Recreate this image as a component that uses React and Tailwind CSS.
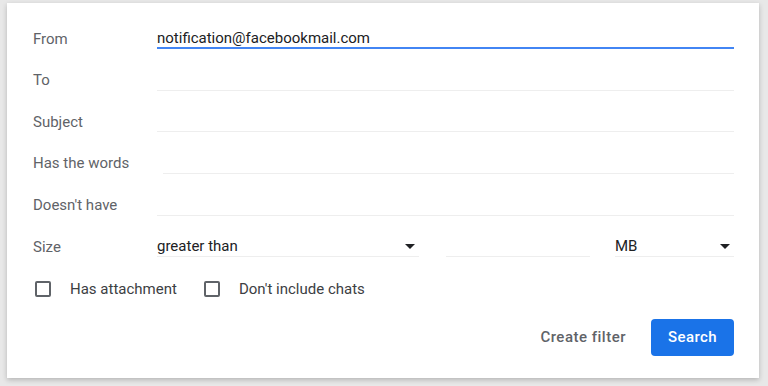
import React from "react";

const Arrow = () => (
  <svg width="10" height="5" viewBox="0 0 10 5" className="shrink-0">
    <path d="M0 0h10L5 5z" fill="#202124" />
  </svg>
);

const Row = ({ label, children }) => (
  <div className="flex h-[41.6px] items-center">
    <div className="w-[124px] shrink-0 text-[15px] text-[#5f6368]">{label}</div>
    <div className="flex flex-1 items-center">{children}</div>
  </div>
);

const Field = ({ value, active, className = "" }) => (
  <div
    className={
      "flex h-[21px] flex-1 items-center text-[15px] text-[#202124] " +
      (active ? "border-b-2 border-[#4285f4] " : "border-b border-[#eeeeee] ") +
      className
    }
  >
    {value}
  </div>
);

const Checkbox = ({ label }) => (
  <label className="flex items-center">
    <span className="h-4 w-4 rounded-[2px] border-2 border-[#5f6368]" />
    <span className="ml-[19px] text-[15px] text-[#3c4043]">{label}</span>
  </label>
);

export default function App() {
  return (
    <div
      className="min-h-screen bg-[#e8e8e8] pl-[7px] pt-[3px]"
      style={{ fontFamily: "Roboto, 'Liberation Sans', sans-serif" }}
    >
      <div className="w-[752px] h-[375px] bg-white pl-[26px] pr-[25px] pt-[15px] shadow-[0_2px_5px_rgba(0,0,0,0.22)]">
        <Row label="From">
          <Field value="notification@facebookmail.com" active />
        </Row>
        <Row label="To">
          <Field />
        </Row>
        <Row label="Subject">
          <Field />
        </Row>
        <Row label="Has the words">
          <Field className="ml-[6px]" />
        </Row>
        <Row label="Doesn't have">
          <Field />
        </Row>
        <Row label="Size">
          <div className="flex h-[21px] w-[262px] items-center justify-between border-b border-[#eeeeee] pr-[4px] text-[15px] text-[#202124]">
            greater than
            <Arrow />
          </div>
          <div className="ml-[27px] h-[21px] w-[144px] border-b border-[#eeeeee]" />
          <div className="ml-[25px] flex h-[21px] flex-1 items-center justify-between border-b border-[#eeeeee] pr-[4px] text-[15px] text-[#202124]">
            MB
            <Arrow />
          </div>
        </Row>
        <div className="mt-[1px] flex h-[41.6px] items-center gap-[27px] pl-[2px]">
          <Checkbox label="Has attachment" />
          <Checkbox label="Don't include chats" />
        </div>
        <div className="mt-[9px] flex items-center justify-end">
          <button className="mr-[25px] text-[15px] font-medium tracking-[0.5px] text-[#5f6368]">
            Create filter
          </button>
          <button className="h-[37px] w-[83px] rounded-[4px] bg-[#1a73e8] text-[15px] font-medium tracking-[0.4px] text-white">
            Search
          </button>
        </div>
      </div>
    </div>
  );
}
